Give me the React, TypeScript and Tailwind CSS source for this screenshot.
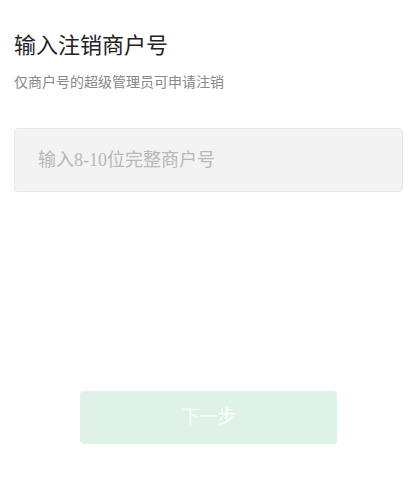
// App.tsx — close-account step: enter merchant id.
import { useState } from "react";

export default function App() {
  const [id, setId] = useState("");

  return (
    <div className="min-h-[492px] w-full bg-white px-[14px] pt-[28px] font-['Noto_Sans_CJK_SC',sans-serif]">
      <h1 className="text-[22px] leading-[30px] text-[#222]">输入注销商户号</h1>
      <p className="mt-[13px] text-[14px] leading-[20px] text-[#888]">仅商户号的超级管理员可申请注销</p>

      <input
        value={id}
        onChange={(e) => setId(e.target.value)}
        placeholder="输入8-10位完整商户号"
        className="mt-[37px] block h-[64px] w-full rounded-[4px] border border-[#e6e6e6] bg-[#f3f3f3] px-[23px] font-['Liberation_Serif','Noto_Sans_CJK_SC',serif] text-[18px] text-[#333] placeholder:text-[#b8b8b8] focus:outline-none"
      />

      <div className="mt-[199px] flex justify-center">
        <button
          disabled={id.length < 8}
          className="h-[53px] w-[257px] rounded-[4px] bg-[#dff2e6] font-['Liberation_Serif','Noto_Sans_CJK_SC',serif] text-[18px] text-white"
        >
          下一步
        </button>
      </div>
    </div>
  );
}
